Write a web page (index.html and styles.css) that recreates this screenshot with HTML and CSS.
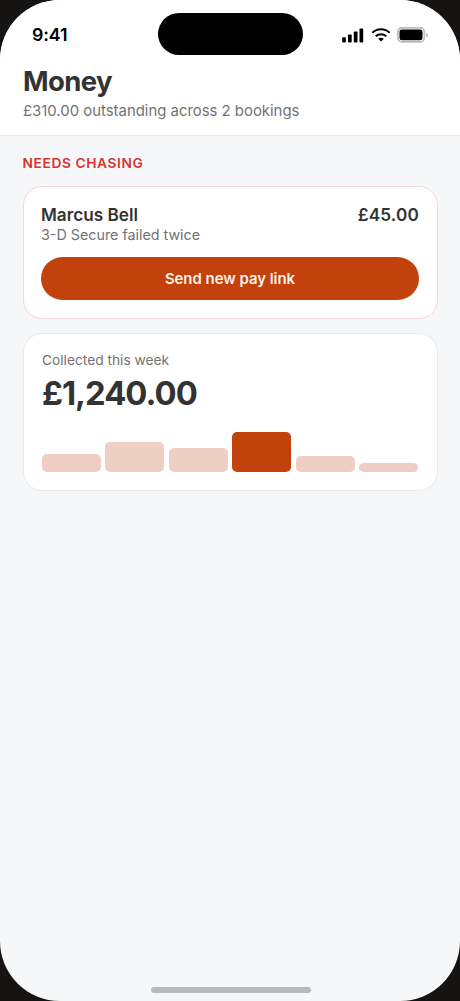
FILE: index.html
```html
<!DOCTYPE html>
<html lang="en">
<head>
<meta charset="utf-8">
<title>Money</title>
<link rel="stylesheet" href="styles.css">
</head>
<body>
<div class="phone">
  <header class="header">
    <div class="status">
      <span class="time">9:41</span>
      <div class="island"></div>
      <div class="indicators">
        <svg class="signal" width="22" height="15" viewBox="0 0 22 15"><rect x="0.2" y="9.2" width="3.7" height="5.2" rx="0.9"/><rect x="6" y="6.4" width="3.7" height="8" rx="0.9"/><rect x="11.8" y="3.4" width="3.7" height="11" rx="0.9"/><rect x="17.5" y="0.6" width="3.7" height="13.8" rx="0.9"/></svg>
        <svg class="wifi" width="20" height="14" viewBox="0 0 20 14"><path class="arc" d="M1.3 4.8C6.2.1 13.8.1 18.7 4.8M4.7 8.2C7.7 5.5 12.3 5.5 15.3 8.2"/><path d="M7.2 10.8c1.7-1.3 3.9-1.3 5.6 0L10 13.5z"/></svg>
        <svg class="battery" width="32" height="16" viewBox="0 0 32 16"><rect class="shell" x=".9" y=".9" width="26.4" height="14" rx="4"/><rect x="2.5" y="2.5" width="23" height="10.8" rx="2.3"/><path class="cap" d="M29.4 5.7c2 .8 2 3.8 0 4.6z"/></svg>
      </div>
    </div>
    <h1 class="title">Money</h1>
    <p class="subtitle">£310.00 outstanding across 2 bookings</p>
  </header>
  <main class="content">
    <h2 class="section">NEEDS CHASING</h2>
    <section class="card chase">
      <div class="row"><span>Marcus Bell</span><span class="amount">£45.00</span></div>
      <p class="reason">3-D Secure failed twice</p>
      <button class="button">Send new pay link</button>
    </section>
    <section class="card collected">
      <p class="label">Collected this week</p>
      <p class="total">£1,240.00</p>
      <div class="chart">
        <div class="bar" style="height:18px"></div>
        <div class="bar" style="height:30px"></div>
        <div class="bar" style="height:24px"></div>
        <div class="bar peak" style="height:40px"></div>
        <div class="bar" style="height:16px"></div>
        <div class="bar" style="height:9px"></div>
      </div>
    </section>
  </main>
  <div class="home"></div>
</div>
</body>
</html>
```
FILE: styles.css
```css
* { box-sizing: border-box; margin: 0; padding: 0; }
body { background: #161412; font-family: Inter, sans-serif; color: #333; }
.phone { width: 460px; height: 1001px; border-radius: 60px; overflow: hidden; background: #f5f7f9; display: flex; flex-direction: column; }
.header { height: 136px; background: #fff; border-bottom: 1px solid #e4e7e8; padding: 0 23px; }
.status { height: 62px; padding: 12.5px 8.5px 0 9px; display: grid; grid-template-columns: 1fr 145px 1fr; align-items: start; }
.time { font-size: 17.8px; line-height: 22px; font-weight: 600; color: #000; padding-top: 11.5px; letter-spacing: -0.1px; }
.island { height: 42.5px; border-radius: 22px; background: #000; }
.indicators { display: flex; align-items: center; justify-content: flex-end; padding-top: 14.5px; }
.signal { margin-right: 7px; }
.wifi { margin-right: 6px; }
.arc { fill: none; stroke: #000; stroke-width: 2; }
.shell { fill: none; stroke: #bbb; stroke-width: 1.7; }
.cap { fill: #aaa; }
.title { font-size: 27.5px; line-height: 36px; font-weight: 700; letter-spacing: -0.6px; padding-top: 0.5px; }
.subtitle { font-size: 14.9px; line-height: 20px; color: #737373; margin-top: 2.5px; }
.content { flex: 1; padding: 17px 22.5px 0; display: flex; flex-direction: column; }
.section { font-size: 13.75px; line-height: 20px; font-weight: 600; color: #d93434; letter-spacing: 0.6px; margin-bottom: 13px; }
.card { background: #fff; border: 1px solid #e7eaec; border-radius: 19px; }
.chase { border-color: #f9d5d8; height: 132.5px; padding: 17px 17.5px; margin-bottom: 14px; }
.row { display: flex; justify-content: space-between; font-size: 17.2px; line-height: 21px; font-weight: 600; }
.amount { letter-spacing: 0.15px; }
.reason { font-size: 14.3px; line-height: 20px; color: #737373; margin-bottom: 12px; }
.button { display: block; width: 100%; height: 43px; border: 0; border-radius: 22px; background: #c2410c; color: #fff1e8; font: 600 14.9px/20px Inter, sans-serif; }
.collected { height: 158.5px; padding: 16px 18.5px 18px; display: flex; flex-direction: column; }
.label { font-size: 13.75px; line-height: 20px; color: #737373; }
.total { font-size: 32.8px; line-height: 42px; font-weight: 700; letter-spacing: -1px; margin-top: 2.5px; }
.chart { margin-top: auto; height: 40px; display: flex; align-items: flex-end; gap: 4.6px; }
.bar { flex: 1; border-radius: 5px; background: #efcfc4; }
.peak { background: #c2410c; }
.home { width: 160px; height: 6px; border-radius: 3px; background: #b9babb; align-self: center; margin: 0 0 8.5px 1px; }
```
